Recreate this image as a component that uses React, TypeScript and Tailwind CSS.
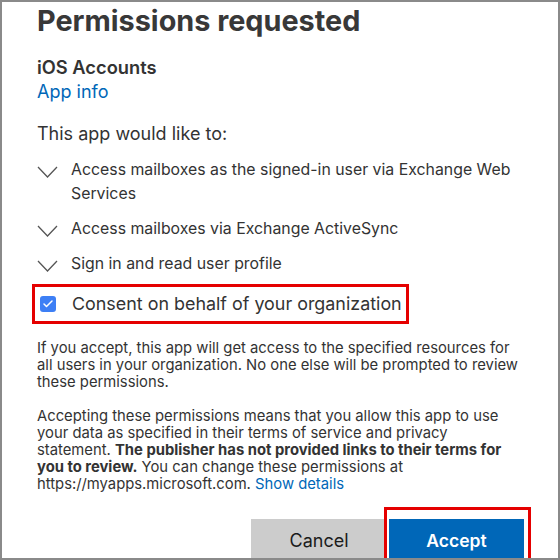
import { Check } from 'lucide-react';

const permissions = [
  'Access mailboxes as the signed-in user via Exchange Web Services',
  'Access mailboxes via Exchange ActiveSync',
  'Sign in and read user profile',
];

function Chevron() {
  return (
    <svg width="21" height="12" viewBox="0 0 21 12" className="shrink-0 mt-[8px]">
      <path d="M1 1 L10.5 11 L20 1" fill="none" stroke="#555" strokeWidth="1.3" />
    </svg>
  );
}

export default function App() {
  return (
    <div className="w-[560px] h-[560px] overflow-hidden bg-white border-2 border-[#8a8a8a] text-[#333] font-['Inter','Liberation_Sans',Arial,sans-serif]">
      <div className="pl-[35px] pr-[36px]">
        <h1 className="text-[28.8px] leading-[36px] font-bold mt-[1px] text-[#383838]">Permissions requested</h1>

        <div className="mt-[16px] text-[18.3px] leading-[24px] font-semibold text-[#333]">iOS Accounts</div>
        <div className="text-[18px] leading-[26px] text-[#0067b8]">App info</div>

        <p className="mt-[17px] text-[18px] leading-[24px] text-[#333]">This app would like to:</p>

        <ul className="mt-[12px] flex flex-col gap-[11px]">
          {permissions.map((p) => (
            <li key={p} className="flex items-start gap-[13px]">
              <Chevron />
              <span className="text-[15.85px] leading-[24px] text-[#333]">{p}</span>
            </li>
          ))}
        </ul>

        <div className="mt-[8px] -ml-[5px] w-[377px] h-[40px] border-[3px] border-[#e50000] flex items-center pl-[5px] gap-[16px]">
          <span className="w-[16px] h-[16px] rounded-[3px] bg-[#3d7ff5] flex items-center justify-center">
            <Check size={12} strokeWidth={3} color="white" />
          </span>
          <span className="text-[17.9px] leading-[24px] text-[#333]">Consent on behalf of your organization</span>
        </div>

        <p className="mt-[16px] text-[14.8px] leading-[17px] text-[#333]">
          If you accept, this app will get access to the specified resources for all users in your organization. No one else will be prompted to review these permissions.
        </p>

        <p className="mt-[17px] text-[14.8px] leading-[17px] text-[#333]">
          Accepting these permissions means that you allow this app to use your data as specified in their terms of service and privacy statement.{' '}
          <b className="font-bold">The publisher has not provided links to their terms for you to review.</b> You can change these permissions at https://myapps.microsoft.com.{' '}
          <span className="text-[#0067b8]">Show details</span>
        </p>

        <div className="mt-[14px] flex justify-end items-start">
          <div className="mt-[12px] w-[136px] h-[42px] bg-[#cccccc] flex items-center justify-center text-[18px] text-[#1b1b1b]">Cancel</div>
          <div className="ml-[-3px] -mr-[9px] border-[3px] border-[#e50000] border-b-0 pt-[9px] pl-[2px] pr-[4px]">
            <div className="w-[135px] h-[44px] bg-[#0067b8] flex items-center justify-center text-[17.5px] font-semibold text-white">Accept</div>
          </div>
        </div>
      </div>
    </div>
  );
}
